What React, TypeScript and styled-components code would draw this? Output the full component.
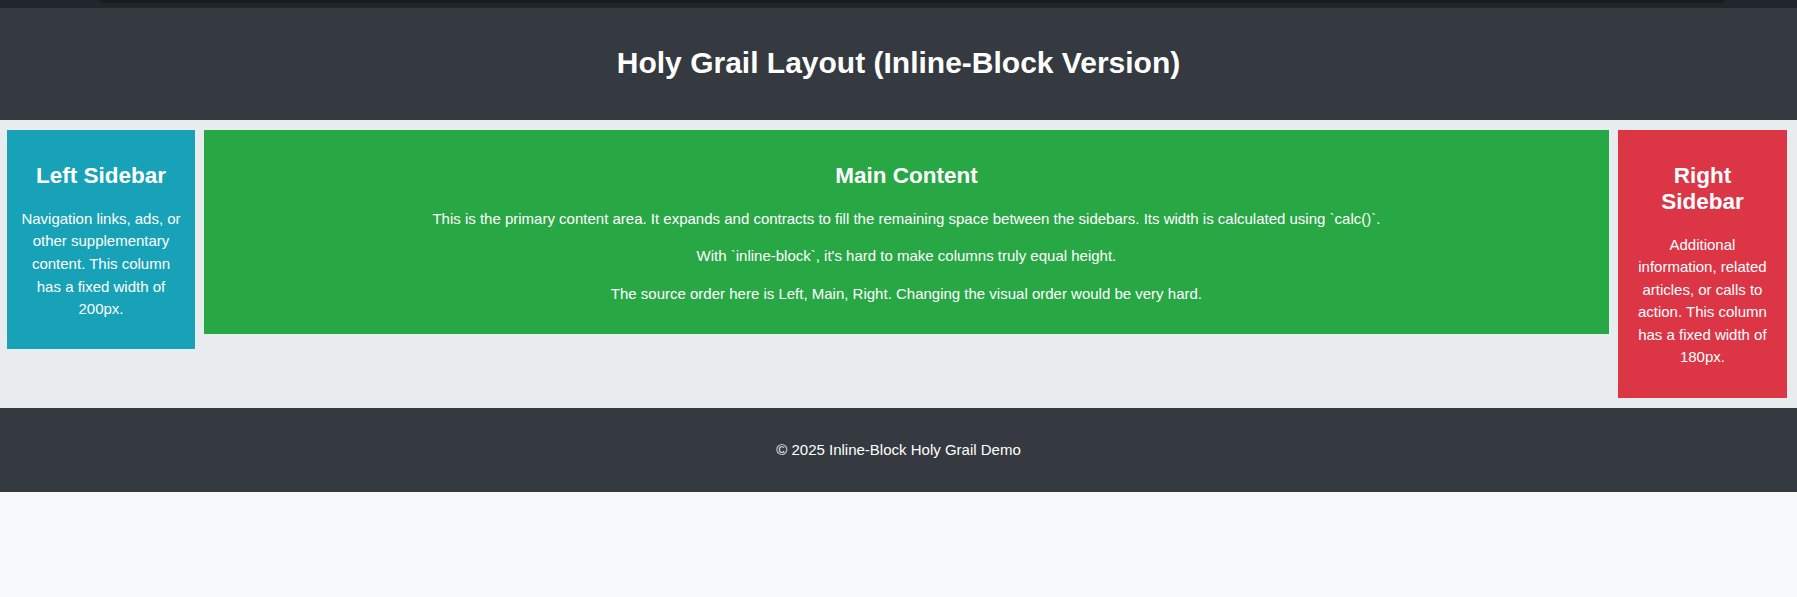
import React from "react";
import styled, { createGlobalStyle } from "styled-components";

const GlobalStyle = createGlobalStyle`
  html, body {
    margin: 0;
    padding: 0;
    background: #f8f9fa;
    font-family: "Liberation Sans", Arial, sans-serif;
    color: #ffffff;
  }
  * { box-sizing: border-box; }
`;

const Page = styled.div`
  min-height: 597px;
  background: #f8f9fa;
  display: flex;
  flex-direction: column;
`;

const TopStrip = styled.div`
  height: 8px;
  background: #222529;
  padding: 0 72px 0 100px;
`;

const TopStripBar = styled.div`
  height: 3px;
  background: #1b1c20;
  border-radius: 0 0 6px 6px;
`;

const Header = styled.header`
  background: #343a40;
  height: 112px;
  padding: 18px 0 0;
  text-align: center;
`;

const Title = styled.h1`
  margin: 20px 0 0;
  font-size: 30px;
  line-height: 34.5px;
  font-weight: 700;
  color: #ffffff;
`;

const Container = styled.main`
  background: #e9ecef;
  display: flex;
  align-items: flex-start;
  gap: 9px;
  padding: 10px 10px 10px 7px;
`;

const Column = styled.section<{ $bg: string; $width?: number; $extra?: number }>`
  background: ${(p) => p.$bg};
  ${(p) => (p.$width ? `width: ${p.$width}px; flex: 0 0 ${p.$width}px;` : `flex: 1 1 auto; min-width: 0;`)}
  padding: 15px 14px ${(p) => 13.4 + (p.$extra ?? 0)}px;
  text-align: center;
  color: #ffffff;
`;

const ColumnTitle = styled.h2`
  margin: 18.2px 0 18.8px;
  font-size: 22.5px;
  line-height: 25.85px;
  font-weight: 700;
`;

const Text = styled.p`
  margin: 15.04px 0;
  font-size: 15px;
  line-height: 22.56px;
`;

const Footer = styled.footer`
  background: #343a40;
  height: 84px;
  display: flex;
  align-items: center;
  justify-content: center;
`;

const FooterText = styled.p`
  margin: 0;
  font-size: 15px;
  line-height: 22px;
  color: #ffffff;
`;

export default function App() {
  return (
    <>
      <GlobalStyle />
      <Page>
        <TopStrip>
          <TopStripBar />
        </TopStrip>
        <Header>
          <Title>Holy Grail Layout (Inline-Block Version)</Title>
        </Header>
        <Container>
          <Column $bg="#17a2b8" $width={188}>
            <ColumnTitle>Left Sidebar</ColumnTitle>
            <Text>
              Navigation links, ads, or other supplementary content. This column has a fixed width of 200px.
            </Text>
          </Column>
          <Column $bg="#28a745">
            <ColumnTitle>Main Content</ColumnTitle>
            <Text>
              This is the primary content area. It expands and contracts to fill the remaining space between the
              sidebars. Its width is calculated using `calc()`.
            </Text>
            <Text>With `inline-block`, it's hard to make columns truly equal height.</Text>
            <Text>The source order here is Left, Main, Right. Changing the visual order would be very hard.</Text>
          </Column>
          <Column $bg="#dc3545" $width={169.2} $extra={0.5}>
            <ColumnTitle>Right Sidebar</ColumnTitle>
            <Text>
              Additional information, related articles, or calls to action. This column has a fixed width of 180px.
            </Text>
          </Column>
        </Container>
        <Footer>
          <FooterText>© 2025 Inline-Block Holy Grail Demo</FooterText>
        </Footer>
      </Page>
    </>
  );
}
